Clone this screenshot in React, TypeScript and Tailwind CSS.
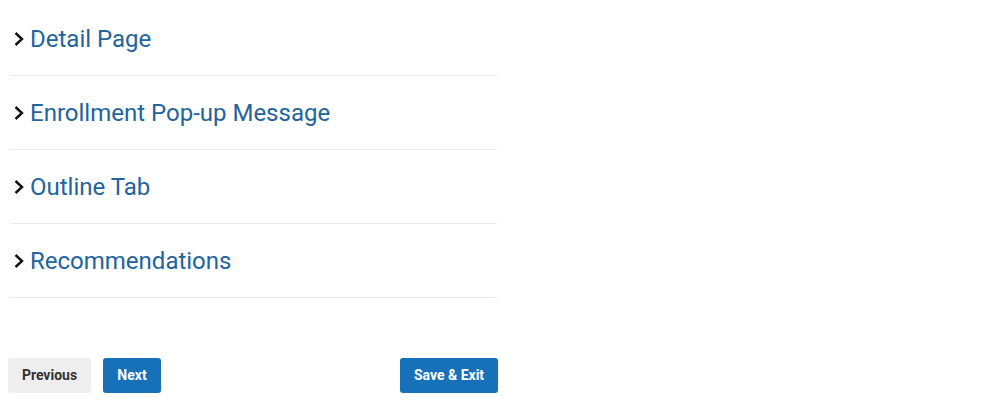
import React from "react";

const items = ["Detail Page", "Enrollment Pop-up Message", "Outline Tab", "Recommendations"];

function Chevron() {
  return (
    <svg width="10" height="16" viewBox="0 0 10 16" className="shrink-0">
      <polyline points="1.5,2 8,8 1.5,14" fill="none" stroke="#111" strokeWidth="2.4" />
    </svg>
  );
}

export default function App() {
  return (
    <div className="bg-white w-[985px] h-[403px] pt-[2px]" style={{ fontFamily: "Roboto, sans-serif" }}>
      <div className="ml-[8px] w-[490px]">
        {items.map((t) => (
          <div key={t} className="h-[74px] border-b border-[#e9e9e9] rounded-b-[4px] pt-[23px]">
            <div className="flex items-center h-[28px] pl-[6px] gap-[6px]">
              <Chevron />
              <span className="text-[24px] leading-[28px] text-[#22649c]">{t}</span>
            </div>
          </div>
        ))}
        <div className="flex items-center mt-[60px]">
          <button className="h-[35px] w-[83px] rounded-[3px] bg-[#eeeeee] text-[#333] text-[14px] font-bold">Previous</button>
          <button className="ml-[12px] h-[35px] w-[58px] rounded-[3px] bg-[#1771b9] text-white text-[14px] font-bold">Next</button>
          <button className="ml-auto h-[35px] w-[98px] rounded-[3px] bg-[#1771b9] text-white text-[14px] font-bold">Save &amp; Exit</button>
        </div>
      </div>
    </div>
  );
}
